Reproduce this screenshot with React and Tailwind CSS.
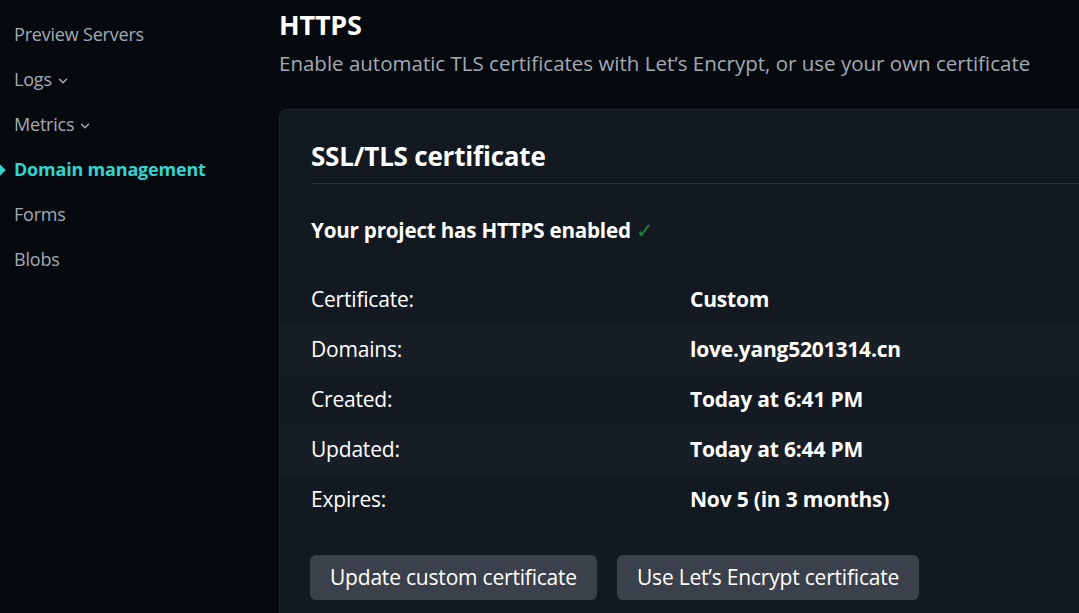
import { ChevronDown } from 'lucide-react';

const nav = [
  { label: 'Preview Servers' },
  { label: 'Logs', caret: true },
  { label: 'Metrics', caret: true },
  { label: 'Domain management', active: true },
  { label: 'Forms' },
  { label: 'Blobs' },
];

const rows = [
  ['Certificate:', 'Custom'],
  ['Domains:', 'love.yang5201314.cn'],
  ['Created:', 'Today at 6:41 PM'],
  ['Updated:', 'Today at 6:44 PM'],
  ['Expires:', 'Nov 5 (in 3 months)'],
];

export default function App() {
  return (
    <div
      className="w-[1079px] h-[613px] overflow-hidden bg-[#06090d] flex text-white"
      style={{ fontFamily: '"Open Sans", "Noto Sans", sans-serif' }}
    >
      <aside className="w-[279px] shrink-0 pt-[12px]">
        {nav.map((n) => (
          <div key={n.label} className="relative h-[45px] flex items-center pl-[14px]">
            {n.active && (
              <span className="absolute left-[-4px] top-1/2 -translate-y-1/2 w-[8px] h-[8px] rotate-45 bg-[#32d4d0]" />
            )}
            <span
              className={
                n.active
                  ? 'text-[18px] font-bold text-[#32d4d0] tracking-[-0.2px]'
                  : 'text-[18px] text-[#a3aab3] tracking-[-0.2px]'
              }
            >
              {n.label}
            </span>
            {n.caret && <ChevronDown className="ml-[4px] mt-[2px] text-[#a3aab3]" size={14} strokeWidth={2.5} />}
          </div>
        ))}
      </aside>

      <main className="flex-1 min-w-0 pt-[8px]">
        <h1 className="text-[27px] font-bold leading-[34px] tracking-[-0.2px]">HTTPS</h1>
        <p className="mt-[7px] text-[20.5px] leading-[28px] text-[#a3aab3] whitespace-nowrap">
          Enable automatic TLS certificates with Let’s Encrypt, or use your own certificate
        </p>

        <section className="mt-[32px] w-[900px] rounded-tl-[8px] border-t border-l border-[#202630] bg-[#131920]">
          <div className="ml-[31px] pt-[29px] pb-[10px] border-b border-[#2a3038]">
            <h2 className="text-[26px] font-bold leading-[34px] tracking-[-0.2px]">SSL/TLS certificate</h2>
          </div>
          <p className="ml-[31px] mt-[32px] text-[20.6px] font-bold leading-[28px] tracking-[-0.2px]">
            Your project has HTTPS enabled <span className="text-[#238636] font-normal">✓</span>
          </p>

          <div className="mt-[31px]">
            {rows.map(([k, v], i) => (
              <div
                key={k}
                className={
                  i % 2 === 1
                    ? 'h-[50px] flex items-center bg-[#181e26]'
                    : 'h-[50px] flex items-center'
                }
              >
                <span className="w-[410px] shrink-0 pl-[31px] text-[21px] tracking-[-0.2px]">{k}</span>
                <span className="text-[21px] font-bold tracking-[-0.2px]">{v}</span>
              </div>
            ))}
          </div>

          <div className="ml-[30px] mt-[30px] flex gap-[20px] pb-[20px]">
            <button className="h-[45px] px-[20px] rounded-[6px] bg-[#3a414b] text-[21px] tracking-[-0.2px]">
              Update custom certificate
            </button>
            <button className="h-[45px] px-[20px] rounded-[6px] bg-[#3a414b] text-[21px] tracking-[-0.2px]">
              Use Let’s Encrypt certificate
            </button>
          </div>
        </section>
      </main>
    </div>
  );
}
